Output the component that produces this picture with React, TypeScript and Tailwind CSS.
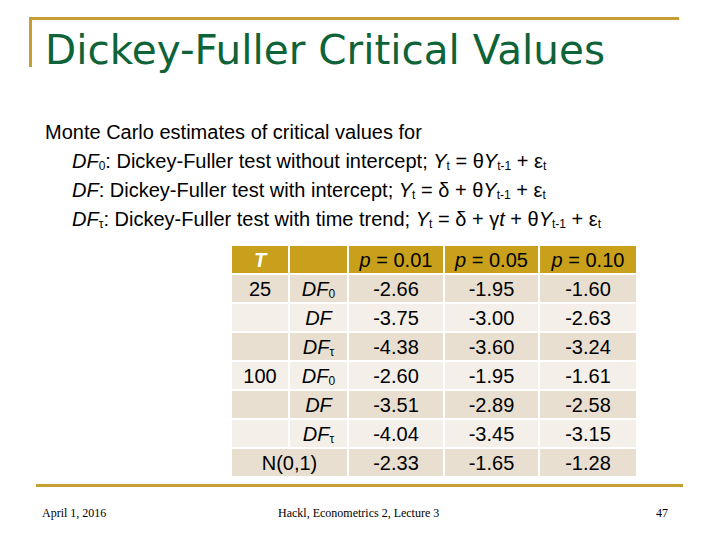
const GOLD = "bg-[#c4a033]";

type Row = { t?: string; name?: string; sub?: string; vals: string[]; dark: boolean; span?: string };

const rows: Row[] = [
  { t: "25", name: "DF", sub: "0", vals: ["-2.66", "-1.95", "-1.60"], dark: true },
  { name: "DF", vals: ["-3.75", "-3.00", "-2.63"], dark: false },
  { name: "DF", sub: "τ", vals: ["-4.38", "-3.60", "-3.24"], dark: true },
  { t: "100", name: "DF", sub: "0", vals: ["-2.60", "-1.95", "-1.61"], dark: false },
  { name: "DF", vals: ["-3.51", "-2.89", "-2.58"], dark: true },
  { name: "DF", sub: "τ", vals: ["-4.04", "-3.45", "-3.15"], dark: false },
  { span: "N(0,1)", vals: ["-2.33", "-1.65", "-1.28"], dark: true },
];

function Sub({ children }: { children: React.ReactNode }) {
  return <sub className="text-[12px] relative top-[2px]">{children}</sub>;
}

export default function App() {
  return (
    <div className="w-[720px] h-[540px] bg-white flex flex-col font-['Liberation_Sans',Arial,sans-serif] text-black">
      {/* title with gold corner */}
      <div className="ml-[29px] mt-[17px] w-[650px] h-[50px] border-t-[3px] border-l-[3px] border-[#c4a033] pl-[13px] pt-[10px]">
        <h1 className="font-['DejaVu_Sans',Verdana,sans-serif] text-[40.5px] leading-none text-[#0e6338] whitespace-nowrap">
          Dickey-Fuller Critical Values
        </h1>
      </div>

      <div className="mt-[51px] ml-[45px] text-[20px] leading-[29px] whitespace-nowrap">
        <p>Monte Carlo estimates of critical values for</p>
        <div className="pl-[27px]">
          <p>
            <i>DF</i><Sub>0</Sub>: Dickey-Fuller test without intercept; <i>Y</i><Sub>t</Sub> = θ<i>Y</i><Sub>t-1</Sub> + ε<Sub>t</Sub>
          </p>
          <p>
            <i>DF</i>: Dickey-Fuller test with intercept; <i>Y</i><Sub>t</Sub> = δ + θ<i>Y</i><Sub>t-1</Sub> + ε<Sub>t</Sub>
          </p>
          <p>
            <i>DF</i><Sub>τ</Sub>: Dickey-Fuller test with time trend; <i>Y</i><Sub>t</Sub> = δ + γ<i>t</i> + θ<i>Y</i><Sub>t-1</Sub> + ε<Sub>t</Sub>
          </p>
        </div>
      </div>

      {/* critical values table */}
      <div className="ml-[232px] mt-[12px] grid grid-cols-[56px_57px_94px_93px_96px] gap-[2px] text-[20px] leading-none">
        <div className="h-[27px] bg-[#c8a01c] flex items-center justify-center text-white font-bold italic">T</div>
        <div className="h-[27px] bg-[#c8a01c]" />
        {["0.01", "0.05", "0.10"].map((p) => (
          <div key={p} className="h-[27px] bg-[#c8a01c] flex items-center justify-center">
            <i>p</i>&nbsp;= {p}
          </div>
        ))}
        {rows.map((r, i) => {
          const bg = r.dark ? "bg-[#e9dfd1]" : "bg-[#f4efe8]";
          return (
            <div key={i} className="contents">
              {r.span ? (
                <div className={`col-span-2 h-[27px] ${bg} flex items-center justify-center`}>{r.span}</div>
              ) : (
                <>
                  <div className={`h-[27px] ${bg} flex items-center justify-center`}>{r.t}</div>
                  <div className={`h-[27px] ${bg} flex items-center justify-center`}>
                    <span>
                      <i>DF</i>
                      {r.sub && <Sub>{r.sub}</Sub>}
                    </span>
                  </div>
                </>
              )}
              {r.vals.map((v, j) => (
                <div key={j} className={`h-[27px] ${bg} flex items-center justify-center`}>{v}</div>
              ))}
            </div>
          );
        })}
      </div>

      <div className={`ml-[36px] mt-[8px] w-[647px] h-[3px] ${GOLD}`} />

      <div className="mt-[20px] flex items-center font-['Liberation_Serif','Times_New_Roman',serif] text-[12px] leading-none">
        <span className="ml-[42px] w-[236px]">April 1, 2016</span>
        <span className="w-[250px]">Hackl, Econometrics 2, Lecture 3</span>
        <span className="ml-[128px]">47</span>
      </div>
    </div>
  );
}
